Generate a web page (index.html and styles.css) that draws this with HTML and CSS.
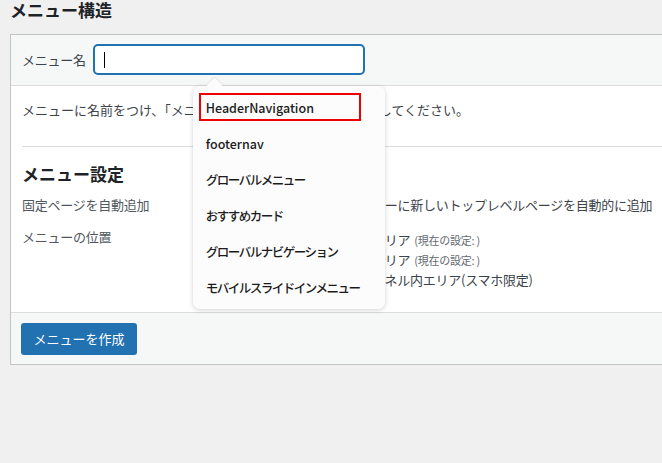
FILE: index.html
```html
<!DOCTYPE html>
<html lang="ja">
<head>
<meta charset="utf-8">
<title>メニュー構造</title>
<link rel="stylesheet" href="styles.css">
</head>
<body>
<h1 class="page-title">メニュー構造</h1>
<div class="panel">
  <div class="panel-head">
    <label class="name-label">メニュー名</label>
    <div class="name-field">
      <div class="name-input"><span class="caret"></span></div>
      <ul class="suggest">
        <li class="suggest-item is-active">HeaderNavigation</li>
        <li class="suggest-item">footernav</li>
        <li class="suggest-item jp">グローバルメニュー</li>
        <li class="suggest-item jp">おすすめカード</li>
        <li class="suggest-item jp">グローバルナビゲーション</li>
        <li class="suggest-item jp">モバイルスライドインメニュー</li>
      </ul>
    </div>
  </div>
  <div class="panel-body">
    <p class="intro">メニューに名前をつけ、「メニューを作成」ボタンをクリックしてください。</p>
    <div class="settings">
      <h2 class="settings-title">メニュー設定</h2>
      <div class="settings-grid">
        <div class="settings-label">固定ページを自動追加</div>
        <div class="settings-value">
          <label class="check-row"><input type="checkbox" class="check">このメニューに新しいトップレベルページを自動的に追加</label>
        </div>
        <div class="settings-label">メニューの位置</div>
        <div class="settings-value locations">
          <label class="check-row"><input type="checkbox" class="check">ヘッダーエリア <span class="note">(現在の設定: )</span></label>
          <label class="check-row"><input type="checkbox" class="check">フッターエリア <span class="note">(現在の設定: )</span></label>
          <label class="check-row"><input type="checkbox" class="check">ドロワーパネル内エリア(スマホ限定)</label>
        </div>
      </div>
    </div>
  </div>
  <div class="panel-foot">
    <button class="btn-primary" type="button">メニューを作成</button>
  </div>
</div>
</body>
</html>
```
FILE: styles.css
```css
html {
  overflow: hidden;
}
body {
  margin: 0;
  background: #f0f0f1;
  font-family: "Noto Sans CJK JP", "Noto Sans", sans-serif;
  font-size: 13px;
  color: #3c434a;
}
.page-title {
  margin: 0 0 14px;
  padding: 0 10px;
  font-size: 17px;
  line-height: 20px;
  font-weight: 700;
  color: #1d2327;
}
.panel {
  margin-left: 10px;
  margin-right: -20px;
  border: 1px solid #c3c4c7;
  background: #fff;
  letter-spacing: -0.25px;
}
.panel-head {
  display: flex;
  align-items: center;
  gap: 7px;
  padding: 9px 0 10px 11px;
  background: #f6f7f7;
  border-bottom: 1px solid #dcdcde;
}
.name-label {
  line-height: 20px;
  color: #3c434a;
}
.name-field {
  position: relative;
}
.name-input {
  box-sizing: border-box;
  width: 272px;
  height: 31px;
  border: 2px solid #2271b1;
  border-radius: 5px;
  background: #fff;
  display: flex;
  align-items: center;
  padding-left: 9px;
}
.caret {
  width: 1px;
  height: 16px;
  background: #000;
}
.suggest {
  position: absolute;
  left: 100px;
  top: 42px;
  z-index: 10;
  box-sizing: border-box;
  width: 192px;
  height: 223px;
  margin: 0;
  padding: 7px 0 0;
  list-style: none;
  display: flex;
  flex-direction: column;
  gap: 8px;
  background: #fdfcfd;
  border-radius: 7px;
  box-shadow: 0 1px 5px rgba(0, 0, 0, 0.18);
  letter-spacing: 0;
}
.suggest::before {
  content: "";
  position: absolute;
  left: 16px;
  top: -6px;
  width: 11px;
  height: 11px;
  background: #fdfcfd;
  transform: rotate(45deg);
  box-shadow: -1px -1px 2px rgba(0, 0, 0, 0.07);
}
.suggest-item {
  box-sizing: border-box;
  flex: none;
  width: 162px;
  height: 28px;
  margin-left: 6px;
  padding-left: 5px;
  border: 2px solid transparent;
  display: flex;
  align-items: center;
  font-size: 12.5px;
  font-weight: 500;
  color: #1b1b1b;
  white-space: nowrap;
}
.suggest-item.jp {
  letter-spacing: -1.5px;
}
.suggest-item.is-active {
  border-color: #ee0000;
}
.panel-body {
  padding-left: 11px;
}
.intro {
  margin: 14px 0 26px;
  line-height: 20px;
  letter-spacing: 0;
}
.settings {
  border-top: 1px solid #dcdcde;
  padding-bottom: 22px;
}
.settings-title {
  margin: 17px 0 11px;
  font-size: 17px;
  line-height: 20px;
  font-weight: 700;
  color: #1d2327;
  letter-spacing: 0;
}
.settings-grid {
  display: grid;
  grid-template-columns: 278px 1fr;
  row-gap: 12px;
  line-height: 20px;
}
.settings-label {
  color: #50575e;
}
.settings-value {
  color: #3c434a;
}
.locations {
  padding-top: 3px;
}
.check-row {
  display: flex;
  align-items: center;
  height: 20px;
  white-space: nowrap;
}
.check {
  box-sizing: border-box;
  width: 16px;
  height: 16px;
  margin: 0 5px 0 0;
}
.note {
  font-size: 11px;
  color: #646970;
  margin-left: 4px;
}
.panel-foot {
  padding: 10px 0 9px 10px;
  background: #f6f7f7;
  border-top: 1px solid #dcdcde;
}
.btn-primary {
  display: block;
  width: 116px;
  height: 32px;
  padding: 0;
  border: 0;
  border-radius: 3px;
  background: #2271b1;
  color: #fff;
  font-family: inherit;
  font-size: 13px;
  line-height: 32px;
}
```
